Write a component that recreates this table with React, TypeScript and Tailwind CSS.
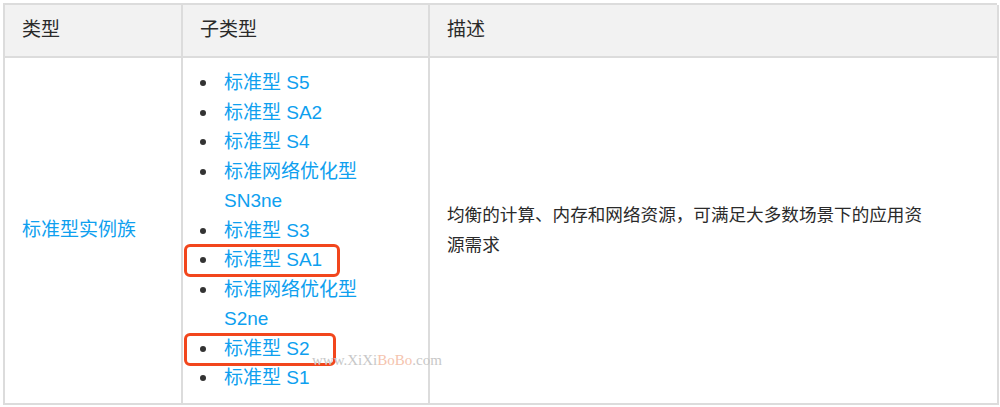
const subTypes = [
  { name: "标准型 S5" },
  { name: "标准型 SA2" },
  { name: "标准型 S4" },
  { name: "标准网络优化型 SN3ne" },
  { name: "标准型 S3" },
  { name: "标准型 SA1", box: "w-[156px]" },
  { name: "标准网络优化型 S2ne" },
  { name: "标准型 S2", box: "w-[152px]" },
  { name: "标准型 S1" },
];

const cell = "border-[#dcdcdc]";

export default function App() {
  return (
    <div
      className="w-[1000px] h-[407px] bg-white pl-[3px] pt-[3px] overflow-hidden text-[#2a2a2a]"
      style={{ fontFamily: '"Liberation Sans", "Noto Sans CJK SC", sans-serif' }}
    >
      <div className="relative w-[994px] grid grid-cols-[178px_247px_569px] border-t-2 border-l-2 border-[#dcdcdc]">
        {/* header */}
        <div className={`h-[53px] bg-[#f2f2f2] border-r-2 border-b-2 ${cell} flex items-center pl-[17px] text-[19px]`}>
          类型
        </div>
        <div className={`h-[53px] bg-[#f2f2f2] border-r-2 border-b-2 ${cell} flex items-center pl-[17px] text-[19px]`}>
          子类型
        </div>
        <div className={`h-[53px] bg-[#f2f2f2] border-r-2 border-b-2 ${cell} flex items-center pl-[17px] text-[19px]`}>
          描述
        </div>

        {/* body */}
        <div className={`h-[347px] border-r-2 border-b-2 ${cell} flex items-center pl-[17px] text-[19px] text-[#0ea0ef]`}>
          标准型实例族
        </div>
        <div className={`h-[347px] border-r-2 border-b-2 ${cell} pl-[18px] pt-[10px]`}>
          <ul className="w-[190px] text-[19px] leading-[29.5px]">
            {subTypes.map((t) => (
              <li key={t.name} className="relative flex">
                <span className="w-[23px] shrink-0 flex items-start pt-[12px]">
                  <span className="w-[6px] h-[6px] rounded-full bg-[#333] ml-[-1px]" />
                </span>
                <span className="text-[#0ea0ef]">{t.name}</span>
                {t.box && (
                  <span className={`absolute left-[-17px] top-[-1px] ${t.box} h-[33px] border-[3px] border-[#f2461c] rounded-[6px]`} />
                )}
              </li>
            ))}
          </ul>
        </div>
        <div className={`h-[347px] border-r-2 border-b-2 ${cell} flex items-center pl-[17px]`}>
          <p className="w-[480px] text-[17.6px] leading-[29.5px]">
            均衡的计算、内存和网络资源，可满足大多数场景下的应用资源需求
          </p>
        </div>

        {/* watermark */}
        <div
          className="absolute left-[307px] top-[344px] text-[15px] text-[#c8c8c8]"
          style={{ fontFamily: '"Liberation Serif", serif' }}
        >
          www.XiXi<span className="text-[#f5c4ae]">BoBo</span>.com
        </div>
      </div>
    </div>
  );
}
